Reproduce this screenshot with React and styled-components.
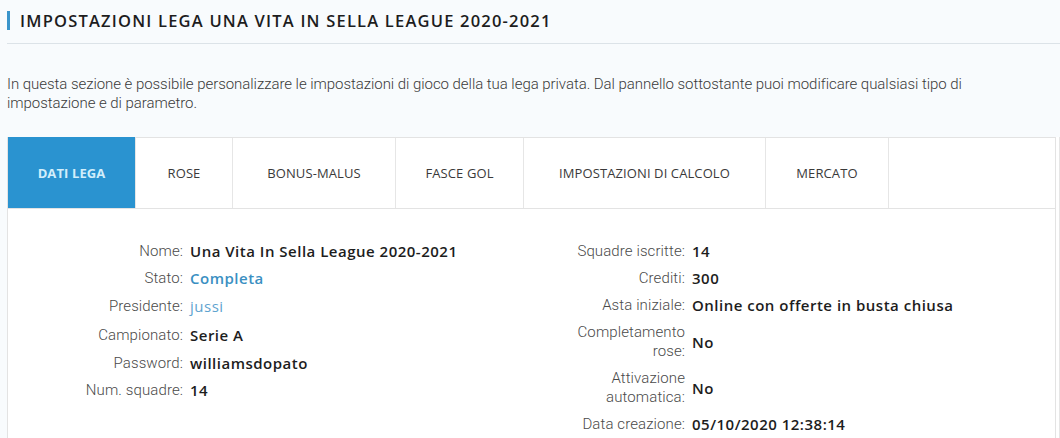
import React from 'react';
import styled, { createGlobalStyle } from 'styled-components';

const GlobalStyle = createGlobalStyle`
  body {
    margin: 0;
    background: #f8fbfd;
    font-family: Roboto, "Liberation Sans", sans-serif;
  }
`;

const Page = styled.div`
  padding: 0 0 0 7px;
  width: 1053px;
  height: 438px;
  overflow: hidden;
`;

const TitleBar = styled.div`
  display: flex;
  align-items: center;
  height: 44px;
  border-bottom: 1px solid #dce3e8;
  box-sizing: border-box;
  padding-bottom: 3px;
`;

const Accent = styled.span`
  width: 3px;
  height: 19px;
  background: #3a95cb;
  margin-right: 10px;
`;

const Title = styled.h1`
  margin: 0;
  font-family: "Open Sans", sans-serif;
  font-weight: 600;
  font-size: 16.5px;
  letter-spacing: 1.2px;
  color: #1d1d1d;
`;

const Intro = styled.p`
  margin: 31px 0 24px;
  font-size: 15px;
  line-height: 19px;
  font-weight: 300;
  letter-spacing: -0.05px;
  color: #3a3a3a;
  max-width: 990px;
`;

const Panel = styled.div`
  background: #fff;
  border: 1px solid #e3e3e3;
  margin-right: 4px;
  box-shadow: 3px 0 0 #fff, 4px 0 0 #e6e6e6;
  min-height: 320px;
`;

const Tabs = styled.div`
  display: flex;
  height: 70px;
  border-bottom: 1px solid #e3e3e3;
`;

const Tab = styled.div`
  width: ${p => p.w}px;
  display: flex;
  align-items: center;
  justify-content: center;
  border-right: 1px solid #e6e6e6;
  box-sizing: border-box;
  font-family: "Open Sans", sans-serif;
  font-size: 13px;
  letter-spacing: 0.1px;
  color: ${p => (p.active ? '#d2eefb' : '#3a3a3a')};
  font-weight: ${p => (p.active ? 700 : 400)};
  background: ${p => (p.active ? '#2a93d0' : '#fff')};
  margin-top: ${p => (p.active ? '-1px' : '0')};
`;

const Details = styled.div`
  display: grid;
  grid-template-columns: 523px 1fr;
  padding-top: 29px;
`;

const List = styled.dl`
  margin: 0;
  padding-left: ${p => p.indent}px;
  display: grid;
  grid-template-columns: ${p => p.label}px 1fr;
  column-gap: 7px;
  align-content: start;
`;

const Label = styled.dt`
  text-align: right;
  font-size: 15px;
  font-weight: 300;
  letter-spacing: 0.1px;
  color: #4a4a4a;
  line-height: 19px;
  padding: ${p => p.pad || 4}px 0;
  display: flex;
  align-items: center;
  justify-content: flex-end;
`;

const Value = styled.dd`
  margin: 0;
  font-family: "Open Sans", sans-serif;
  font-size: 15px;
  letter-spacing: 0.5px;
  font-weight: ${p => (p.light ? 400 : 600)};
  color: ${p => p.color || '#1d1d1d'};
  line-height: 19px;
  padding: ${p => p.pad || 4}px 0;
  display: flex;
  align-items: center;
`;

const tabs = [
  ['DATI LEGA', 128],
  ['ROSE', 97],
  ['BONUS-MALUS', 163],
  ['FASCE GOL', 128],
  ['IMPOSTAZIONI DI CALCOLO', 242],
  ['MERCATO', 123],
];

const left = [
  { label: 'Nome:', value: 'Una Vita In Sella League 2020-2021' },
  { label: 'Stato:', value: 'Completa', color: '#3a8fc2' },
  { label: 'Presidente:', value: 'jussi', color: '#5ea3cf', light: true, pad: 5 },
  { label: 'Campionato:', value: 'Serie A', pad: 5 },
  { label: 'Password:', value: 'williamsdopato' },
  { label: 'Num. squadre:', value: '14' },
];

const right = [
  { label: 'Squadre iscritte:', value: '14' },
  { label: 'Crediti:', value: '300' },
  { label: 'Asta iniziale:', value: 'Online con offerte in busta chiusa' },
  { label: 'Completamento rose:', value: 'No' },
  { label: 'Attivazione automatica:', value: 'No' },
  { label: 'Data creazione:', value: '05/10/2020 12:38:14' },
];

const renderRows = rows =>
  rows.map(r => (
    <React.Fragment key={r.label}>
      <Label pad={r.pad}>{r.label}</Label>
      <Value pad={r.pad} color={r.color} light={r.light}>{r.value}</Value>
    </React.Fragment>
  ));

export default function App() {
  return (
    <Page>
      <GlobalStyle />
      <TitleBar>
        <Accent />
        <Title>IMPOSTAZIONI LEGA UNA VITA IN SELLA LEAGUE 2020-2021</Title>
      </TitleBar>
      <Intro>
        In questa sezione è possibile personalizzare le impostazioni di gioco della tua lega privata. Dal pannello sottostante puoi modificare qualsiasi tipo di impostazione e di parametro.
      </Intro>
      <Panel>
        <Tabs>
          {tabs.map(([name, w], i) => (
            <Tab key={name} w={w} active={i === 0}>{name}</Tab>
          ))}
        </Tabs>
        <Details>
          <List indent={65} label={110}>{renderRows(left)}</List>
          <List indent={44} label={110}>{renderRows(right)}</List>
        </Details>
      </Panel>
    </Page>
  );
}
